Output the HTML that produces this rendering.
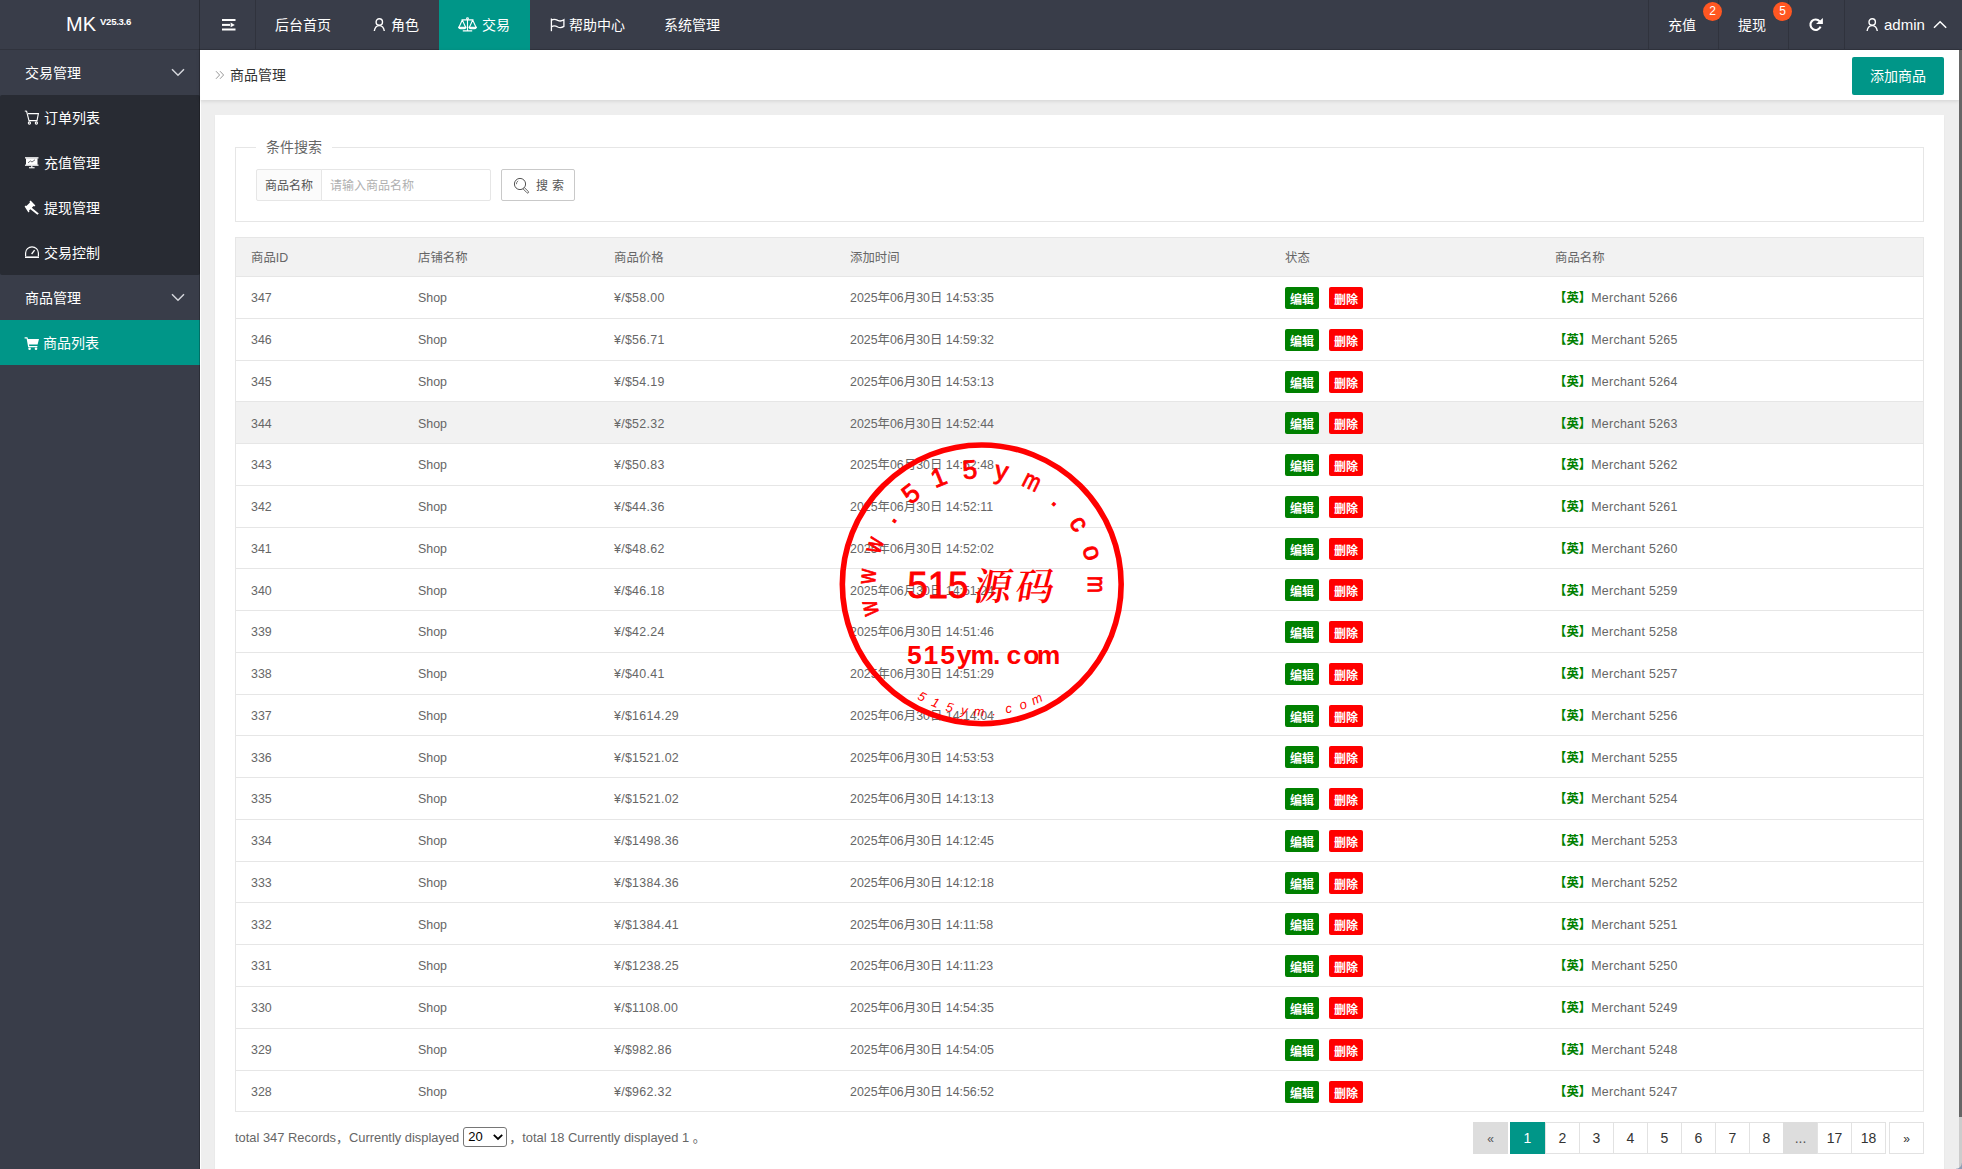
<!DOCTYPE html>
<html lang="zh-CN">
<head>
<meta charset="utf-8">
<title>商品管理</title>
<style>
*{margin:0;padding:0;box-sizing:border-box}
html,body{width:1962px;height:1169px;overflow:hidden;background:#eee;font-family:"Liberation Sans","Noto Sans CJK SC",sans-serif;font-size:14px;color:#666}
a{text-decoration:none;color:inherit}
.abs{position:absolute}
.side{position:absolute;left:0;top:0;width:200px;height:1169px;background:#393D49}
.logo{position:absolute;left:0;top:0;width:200px;height:50px;border-bottom:1px solid #30333d;color:#fff}
.logo .mk{position:absolute;left:66px;top:11px;font-size:20px;line-height:26px;letter-spacing:0px}
.logo .ver{position:absolute;left:100px;top:14.5px;font-size:9.6px;line-height:14px;font-weight:bold;letter-spacing:-0.3px}
.hdr{position:absolute;left:200px;top:0;width:1762px;height:50px;background:#393D49;border-bottom:1px solid #30333d;color:#fff}
.hdr .vl{position:absolute;top:0;width:1px;height:49px;background:#30333d}
.hdr .it{position:absolute;top:0;height:50px;line-height:51px;font-size:14px;white-space:nowrap;color:#fff}
.hdr .act{position:absolute;left:239px;top:0;width:91px;height:50px;background:#009688}
.hdr svg{position:absolute}
.badge{position:absolute;top:2px;width:19px;height:19px;border-radius:10px;background:#FF5722;color:#fff;font-size:12px;line-height:19px;text-align:center}
.menu{position:absolute;left:0;width:200px;height:45px;line-height:47px;color:#fff;font-size:14px}
.menu .t{position:absolute;left:25px;top:0;white-space:nowrap}
.menu svg{position:absolute}
.sub{position:absolute;left:0;top:95px;width:200px;height:180px;background:#282b33;border-radius:2px}
.on{background:#009688}
.crumb{position:absolute;left:200px;top:50px;width:1759px;height:50px;background:#fff;box-shadow:0 1px 4px rgba(0,0,0,.12)}
.crumb .t{position:absolute;left:30px;top:0;line-height:51px;font-size:14px;color:#333}
.crumb .add{position:absolute;left:1652px;top:7px;width:92px;height:38px;border-radius:2px;background:#009688;color:#fff;font-size:14px;line-height:38px;text-align:center}
.card{position:absolute;left:215px;top:115px;width:1729px;height:1060px;background:#fff;box-shadow:0 1px 2px rgba(0,0,0,.05)}
.fs{position:absolute;left:235px;top:147px;width:1689px;height:75px;border:1px solid #e6e6e6}
.lg{position:absolute;left:256px;top:136px;width:76px;height:22px;background:#fff;font-size:14px;line-height:22px;text-align:center;color:#666}
.lab{position:absolute;left:256px;top:169px;width:66px;height:32px;border:1px solid #e6e6e6;background:#FBFBFB;font-size:12px;line-height:33px;text-align:center;color:#555;border-radius:2px 0 0 2px}
.inp{position:absolute;left:321px;top:169px;width:170px;height:32px;border:1px solid #e6e6e6;background:#fff;font-size:12px;line-height:33px;padding-left:8px;color:#b0b0b0;border-radius:0 2px 2px 0}
.sbtn{position:absolute;left:501px;top:169px;width:74px;height:32px;border:1px solid #C9C9C9;background:#fff;border-radius:2px;font-size:12px;line-height:33px;color:#555}
.sbtn span{position:absolute;left:34px;top:0;white-space:nowrap;letter-spacing:.3px}
.tbl{position:absolute;left:235px;top:237px;width:1689px;height:875px;border:1px solid #e6e6e6;font-size:12.4px;color:#666}
.th{position:absolute;left:0;top:0;width:1687px;height:39px;background:#f2f2f2;border-bottom:1px solid #e6e6e6;line-height:41px}
.tr{position:absolute;left:0;width:1687px;border-bottom:1px solid #e6e6e6;background:#fff;line-height:20px}
.tr .c{padding-top:11px}
.hov{background:#f2f2f2}
.c{position:absolute;top:0;height:100%;white-space:nowrap}
.c1{left:15px}.c2{left:182px}.c3{left:378px}.c4{left:614px}.c5{left:1049px}.c6{left:1319px}
.b{position:absolute;top:10px;width:34px;height:22px;border-radius:2px;color:#fff;font-size:12px;line-height:26px;text-align:center;font-weight:bold;letter-spacing:0;overflow:hidden}
.g{left:0;background:#008000}
.r{left:44px;background:#f00}
.en{color:#008000;font-weight:bold}
.foot{position:absolute;left:235px;top:1121px;height:32px;line-height:33px;font-size:12.9px;color:#666;white-space:nowrap}
.sel{display:inline-block;vertical-align:middle;position:relative;width:44px;height:20px;border:1px solid #767676;border-radius:3px;background:#fff;color:#000;font-size:13px;line-height:18px;padding-left:4px;margin:0 2px 0 4px;top:-2px}
.sel svg{position:absolute;left:29px;top:6px}
.pg{position:absolute;top:1122px;height:32px;border:1px solid #e2e2e2;background:#fff;font-size:14px;line-height:30px;text-align:center;color:#333}
.pg.dis{background:#ddd;border-color:#ddd;color:#555}
.pg.cur{background:#009688;border-color:#009688;color:#fff}
.sb{position:absolute;left:1959px;top:50px;width:3px;height:1119px;background:#ccc}
.sb i{position:absolute;left:0;top:0;width:3px;height:1067px;background:#666}
.stamp{position:absolute;left:831px;top:434px;width:300px;height:300px}
.tr .c3{letter-spacing:.3px}
.tr .c6{letter-spacing:.3px;left:1318px}
.tr .c6 .en{letter-spacing:0}
.tr.d1 .c{padding-top:12px}
.tr.dm .c{padding-top:10px}
.wl{position:absolute;left:200px;top:50px;width:1px;height:1119px;background:#fff}
.sl{position:absolute;left:199px;top:0;width:1px;height:1169px;background:rgba(0,0,0,.25)}
.pg.sm{font-size:12px;line-height:32px}
.corner{position:absolute;left:1956px;top:1163px;width:6px;height:6px;background:radial-gradient(circle at 0 0,rgba(0,0,0,0) 5.2px,#8d9db6 6.2px)}

</style>
</head>
<body>
<div class="side">
  <div class="logo"><span class="mk">MK</span><span class="ver">V25.3.6</span></div>
  <div class="menu" style="top:50px"><span class="t">交易管理</span>
    <svg style="left:171px;top:18px" width="14" height="9" viewBox="0 0 14 9"><path d="M1 1.2 L7 7.2 L13 1.2" fill="none" stroke="#d5d7dc" stroke-width="1.5"/></svg></div>
  <div class="sub"></div>
  <div class="menu" style="top:95px"><span class="t" style="left:44px">订单列表</span>
    <svg style="left:24px;top:15px" width="16" height="15" viewBox="0 0 16 15" fill="none" stroke="#fff" stroke-width="1.1"><path d="M0.8 1 L2.6 1.3 L5 10.6 H13 L14.4 3.6 H4"/><circle cx="5.4" cy="13" r="1.1"/><circle cx="12.4" cy="13" r="1.1"/></svg></div>
  <div class="menu" style="top:140px"><span class="t" style="left:44px">充值管理</span>
    <svg style="left:24px;top:16px" width="16" height="13" viewBox="0 0 16 13" fill="#fff"><rect x="1" y="1.2" width="13.5" height="1.3"/><rect x="2" y="2.3" width="11.5" height="6.6"/><rect x="1" y="8.6" width="13.5" height="1.2"/><rect x="7.2" y="9.5" width="1.2" height="2"/><rect x="5" y="11.2" width="5.6" height="1.1"/><path d="M4 6.8 L6.4 5 L8 6 L11 3.8" stroke="#282b33" stroke-width="0.7" fill="none"/></svg></div>
  <div class="menu" style="top:185px"><span class="t" style="left:44px">提现管理</span>
    <svg style="left:24px;top:15px" width="16" height="16" viewBox="0 0 16 16" fill="#fff"><path d="M6.6 0.6 L11.4 5.4 L10.2 6.6 L9.6 6 L7.8 7.8 L14.8 13.4 L13.4 14.8 L6.4 9.2 L5 10.6 L5.6 11.2 L4.4 12.4 L0.6 6.6 L1.8 5.4 L2.4 6 L6 2.4 L5.4 1.8Z"/></svg></div>
  <div class="menu" style="top:230px"><span class="t" style="left:44px">交易控制</span>
    <svg style="left:24px;top:16px" width="16" height="13" viewBox="0 0 16 13" fill="none" stroke="#fff" stroke-width="1.2"><path d="M1.6 10.3 V7 A6.4 6.2 0 0 1 14.4 7 V10.3"/><path d="M1 11.2 H15" stroke-width="1.6"/><path d="M7.6 8 L10.6 4.2" stroke-width="1.3"/></svg></div>
  <div class="menu" style="top:275px"><span class="t">商品管理</span>
    <svg style="left:171px;top:18px" width="14" height="9" viewBox="0 0 14 9"><path d="M1 1.2 L7 7.2 L13 1.2" fill="none" stroke="#d5d7dc" stroke-width="1.5"/></svg></div>
  <div class="menu on" style="top:320px"><span class="t" style="left:43px">商品列表</span>
    <svg style="left:24px;top:16px" width="16" height="15" viewBox="0 0 16 15" fill="#fff"><path d="M0.6 1.2 H3.4 L4 3 H15 L13.6 8.6 H5 L5.3 10 H13.4 V11.2 H4.2 L2.6 2.4 H0.6Z"/><circle cx="5.6" cy="12.8" r="1.3"/><circle cx="12" cy="12.8" r="1.3"/></svg></div>
</div>
<div class="hdr">
  <div class="vl" style="left:55px"></div>
  <div class="act"></div>
  <div class="it" style="left:75px">后台首页</div>
  <div class="it" style="left:191px">角色</div>
  <div class="it" style="left:282px">交易</div>
  <div class="it" style="left:369px">帮助中心</div>
  <div class="it" style="left:464px">系统管理</div>
  <div class="vl" style="left:1448px"></div>
  <div class="vl" style="left:1518px"></div>
  <div class="vl" style="left:1588px"></div>
  <div class="vl" style="left:1644px"></div>
  <div class="it" style="left:1468px">充值</div>
  <div class="badge" style="left:1503px">2</div>
  <div class="it" style="left:1538px">提现</div>
  <div class="badge" style="left:1573px">5</div>
  <div class="it" style="left:1684px;font-size:15px;line-height:49px">admin</div>

  <svg style="left:21.5px;top:19px" width="14" height="12" viewBox="0 0 14 12" fill="#fff"><rect x="0" y="0" width="13.5" height="2"/><rect x="0" y="4.9" width="8" height="2"/><path d="M8.6 3.6 L12.8 5.9 L8.6 8.2Z"/><rect x="0" y="9.5" width="13.5" height="2"/></svg>
  <svg style="left:173px;top:18px" width="13" height="14" viewBox="0 0 13 14" fill="none" stroke="#fff" stroke-width="1.4"><circle cx="6.3" cy="4" r="3.2"/><path d="M1.3 13 C1.8 9.5 3.8 7.6 6.3 7.6 C8.8 7.6 10.8 9.5 11.3 13"/></svg>
  <svg style="left:258px;top:17px" width="19" height="15" viewBox="0 0 19 15" fill="none" stroke="#fff" stroke-width="1.1"><circle cx="9.5" cy="1.6" r="0.9"/><path d="M9.5 2.5 V13.8 M4.8 13.9 H14.2 M3.5 2.9 H15.5 M4.3 3 L1 10.3 M4.3 3 L7.6 10.3 M14.7 3 L11.4 10.3 M14.7 3 L18 10.3"/><path d="M0.6 10.3 H8 C7.6 12.3 1 12.3 0.6 10.3Z M11 10.3 H18.4 C18 12.3 11.4 12.3 11 10.3Z" fill="#fff"/></svg>
  <svg style="left:350px;top:18px" width="15" height="14" viewBox="0 0 15 14" fill="none" stroke="#fff" stroke-width="1.3"><path d="M1.4 0.5 V13.2"/><path d="M1.6 2.1 C4 0.4 6 1.4 7.8 2.4 C9.8 3.4 11.8 3.2 13.9 1.8 V8.4 C11.8 9.8 9.8 10 7.8 9 C6 8 4 7 1.6 8.7"/></svg>
  <svg style="left:1609px;top:18px" width="15" height="14" viewBox="0 0 15 14" fill="none" stroke="#fff" stroke-width="2.1"><path d="M10.72 3.33 A5.25 5.25 0 1 0 11.57 8.67"/><path d="M13.9 0 L13.9 6 L7 6 Z" fill="#fff" stroke="none"/></svg>
  <svg style="left:1666px;top:18px" width="13" height="14" viewBox="0 0 13 14" fill="none" stroke="#fff" stroke-width="1.4"><circle cx="6.2" cy="4" r="3.2"/><path d="M1.1 13 C1.6 9.5 3.7 7.6 6.2 7.6 C8.7 7.6 10.8 9.5 11.3 13"/></svg>
  <svg style="left:1733px;top:20px" width="14" height="9" viewBox="0 0 14 9" fill="none" stroke="#fff" stroke-width="1.5"><path d="M1 7.8 L7.1 1.7 L13.2 7.8"/></svg>
</div>
<div class="wl"></div>
<div class="sl"></div>
<div class="crumb"><svg style="position:absolute;left:15px;top:20px" width="10" height="10" viewBox="0 0 10 10" fill="none" stroke="#999" stroke-width="1"><path d="M1 1.2 L4.6 5 L1 8.8 M5 1.2 L8.6 5 L5 8.8"/></svg><span class="t">商品管理</span><a class="add">添加商品</a></div>
<div class="card"></div>
<div class="fs"></div>
<div class="lg">条件搜索</div>
<div class="lab">商品名称</div>
<div class="inp">请输入商品名称</div>
<div class="sbtn"><svg style="position:absolute;left:11px;top:7px" width="18" height="18" viewBox="0 0 18 18" fill="none" stroke="#555" stroke-width="1"><circle cx="7" cy="7" r="5.6"/><path d="M3.4 7.2 A3.6 3.6 0 0 1 5.2 3.9" stroke-width="0.8"/><path d="M11.2 10.4 L15.3 14.5 A0.9 0.9 0 0 1 14 15.8 L9.9 11.7" stroke-width="0.9"/></svg><span>搜 索</span></div>
<div class="tbl">
<div class="th"><span class="c c1">商品ID</span><span class="c c2">店铺名称</span><span class="c c3">商品价格</span><span class="c c4">添加时间</span><span class="c c5">状态</span><span class="c c6">商品名称</span></div>
<div class="tr" style="top:39px;height:42px"><span class="c c1">347</span><span class="c c2">Shop</span><span class="c c3">¥/$58.00</span><span class="c c4">2025年06月30日 14:53:35</span><span class="c c5"><a class="b g">编辑</a><a class="b r">删除</a></span><span class="c c6"><b class="en">【英】</b>Merchant 5266</span></div>
<div class="tr" style="top:81px;height:42px"><span class="c c1">346</span><span class="c c2">Shop</span><span class="c c3">¥/$56.71</span><span class="c c4">2025年06月30日 14:59:32</span><span class="c c5"><a class="b g">编辑</a><a class="b r">删除</a></span><span class="c c6"><b class="en">【英】</b>Merchant 5265</span></div>
<div class="tr" style="top:123px;height:41px"><span class="c c1">345</span><span class="c c2">Shop</span><span class="c c3">¥/$54.19</span><span class="c c4">2025年06月30日 14:53:13</span><span class="c c5"><a class="b g">编辑</a><a class="b r">删除</a></span><span class="c c6"><b class="en">【英】</b>Merchant 5264</span></div>
<div class="tr hov d1" style="top:164px;height:42px"><span class="c c1">344</span><span class="c c2">Shop</span><span class="c c3">¥/$52.32</span><span class="c c4">2025年06月30日 14:52:44</span><span class="c c5"><a class="b g">编辑</a><a class="b r">删除</a></span><span class="c c6"><b class="en">【英】</b>Merchant 5263</span></div>
<div class="tr" style="top:206px;height:42px"><span class="c c1">343</span><span class="c c2">Shop</span><span class="c c3">¥/$50.83</span><span class="c c4">2025年06月30日 14:52:48</span><span class="c c5"><a class="b g">编辑</a><a class="b r">删除</a></span><span class="c c6"><b class="en">【英】</b>Merchant 5262</span></div>
<div class="tr" style="top:248px;height:42px"><span class="c c1">342</span><span class="c c2">Shop</span><span class="c c3">¥/$44.36</span><span class="c c4">2025年06月30日 14:52:11</span><span class="c c5"><a class="b g">编辑</a><a class="b r">删除</a></span><span class="c c6"><b class="en">【英】</b>Merchant 5261</span></div>
<div class="tr" style="top:290px;height:41px"><span class="c c1">341</span><span class="c c2">Shop</span><span class="c c3">¥/$48.62</span><span class="c c4">2025年06月30日 14:52:02</span><span class="c c5"><a class="b g">编辑</a><a class="b r">删除</a></span><span class="c c6"><b class="en">【英】</b>Merchant 5260</span></div>
<div class="tr d1" style="top:331px;height:42px"><span class="c c1">340</span><span class="c c2">Shop</span><span class="c c3">¥/$46.18</span><span class="c c4">2025年06月30日 14:51:24</span><span class="c c5"><a class="b g">编辑</a><a class="b r">删除</a></span><span class="c c6"><b class="en">【英】</b>Merchant 5259</span></div>
<div class="tr" style="top:373px;height:42px"><span class="c c1">339</span><span class="c c2">Shop</span><span class="c c3">¥/$42.24</span><span class="c c4">2025年06月30日 14:51:46</span><span class="c c5"><a class="b g">编辑</a><a class="b r">删除</a></span><span class="c c6"><b class="en">【英】</b>Merchant 5258</span></div>
<div class="tr" style="top:415px;height:42px"><span class="c c1">338</span><span class="c c2">Shop</span><span class="c c3">¥/$40.41</span><span class="c c4">2025年06月30日 14:51:29</span><span class="c c5"><a class="b g">编辑</a><a class="b r">删除</a></span><span class="c c6"><b class="en">【英】</b>Merchant 5257</span></div>
<div class="tr" style="top:457px;height:41px"><span class="c c1">337</span><span class="c c2">Shop</span><span class="c c3">¥/$1614.29</span><span class="c c4">2025年06月30日 14:14:04</span><span class="c c5"><a class="b g">编辑</a><a class="b r">删除</a></span><span class="c c6"><b class="en">【英】</b>Merchant 5256</span></div>
<div class="tr d1" style="top:498px;height:42px"><span class="c c1">336</span><span class="c c2">Shop</span><span class="c c3">¥/$1521.02</span><span class="c c4">2025年06月30日 14:53:53</span><span class="c c5"><a class="b g">编辑</a><a class="b r">删除</a></span><span class="c c6"><b class="en">【英】</b>Merchant 5255</span></div>
<div class="tr" style="top:540px;height:42px"><span class="c c1">335</span><span class="c c2">Shop</span><span class="c c3">¥/$1521.02</span><span class="c c4">2025年06月30日 14:13:13</span><span class="c c5"><a class="b g">编辑</a><a class="b r">删除</a></span><span class="c c6"><b class="en">【英】</b>Merchant 5254</span></div>
<div class="tr" style="top:582px;height:42px"><span class="c c1">334</span><span class="c c2">Shop</span><span class="c c3">¥/$1498.36</span><span class="c c4">2025年06月30日 14:12:45</span><span class="c c5"><a class="b g">编辑</a><a class="b r">删除</a></span><span class="c c6"><b class="en">【英】</b>Merchant 5253</span></div>
<div class="tr" style="top:624px;height:41px"><span class="c c1">333</span><span class="c c2">Shop</span><span class="c c3">¥/$1384.36</span><span class="c c4">2025年06月30日 14:12:18</span><span class="c c5"><a class="b g">编辑</a><a class="b r">删除</a></span><span class="c c6"><b class="en">【英】</b>Merchant 5252</span></div>
<div class="tr d1" style="top:665px;height:42px"><span class="c c1">332</span><span class="c c2">Shop</span><span class="c c3">¥/$1384.41</span><span class="c c4">2025年06月30日 14:11:58</span><span class="c c5"><a class="b g">编辑</a><a class="b r">删除</a></span><span class="c c6"><b class="en">【英】</b>Merchant 5251</span></div>
<div class="tr" style="top:707px;height:42px"><span class="c c1">331</span><span class="c c2">Shop</span><span class="c c3">¥/$1238.25</span><span class="c c4">2025年06月30日 14:11:23</span><span class="c c5"><a class="b g">编辑</a><a class="b r">删除</a></span><span class="c c6"><b class="en">【英】</b>Merchant 5250</span></div>
<div class="tr" style="top:749px;height:42px"><span class="c c1">330</span><span class="c c2">Shop</span><span class="c c3">¥/$1108.00</span><span class="c c4">2025年06月30日 14:54:35</span><span class="c c5"><a class="b g">编辑</a><a class="b r">删除</a></span><span class="c c6"><b class="en">【英】</b>Merchant 5249</span></div>
<div class="tr" style="top:791px;height:42px"><span class="c c1">329</span><span class="c c2">Shop</span><span class="c c3">¥/$982.86</span><span class="c c4">2025年06月30日 14:54:05</span><span class="c c5"><a class="b g">编辑</a><a class="b r">删除</a></span><span class="c c6"><b class="en">【英】</b>Merchant 5248</span></div>
<div class="tr" style="top:833px;height:41px"><span class="c c1">328</span><span class="c c2">Shop</span><span class="c c3">¥/$962.32</span><span class="c c4">2025年06月30日 14:56:52</span><span class="c c5"><a class="b g">编辑</a><a class="b r">删除</a></span><span class="c c6"><b class="en">【英】</b>Merchant 5247</span></div>
</div>
<div class="foot">total 347 Records，Currently displayed<span class="sel">20<svg width="10" height="7" viewBox="0 0 10 7" fill="none" stroke="#000" stroke-width="1.8"><path d="M0.8 0.8 L5 5 L9.2 0.8"/></svg></span>，total 18 Currently displayed 1 。</div>
<div class="pg dis sm" style="left:1473px;width:35px">«</div>
<div class="pg cur" style="left:1510px;width:35px">1</div>
<div class="pg" style="left:1545px;width:35px">2</div>
<div class="pg" style="left:1579px;width:35px">3</div>
<div class="pg" style="left:1613px;width:35px">4</div>
<div class="pg" style="left:1647px;width:35px">5</div>
<div class="pg" style="left:1681px;width:35px">6</div>
<div class="pg" style="left:1715px;width:35px">7</div>
<div class="pg" style="left:1749px;width:35px">8</div>
<div class="pg dis" style="left:1783px;width:35px">...</div>
<div class="pg" style="left:1817px;width:35px">17</div>
<div class="pg" style="left:1851px;width:35px">18</div>
<div class="pg sm" style="left:1889px;width:35px">»</div>
<svg class="stamp" width="300" height="300" viewBox="0 0 300 300" fill="#f00">
<circle cx="150.75" cy="150.35" r="139.4" fill="none" stroke="#f00" stroke-width="5.6"/>
<text transform="translate(150.75 150.35) rotate(-102) translate(0 -106.5) scale(0.78 1)" text-anchor="middle" font-size="26" font-family="'Liberation Sans',sans-serif" stroke="#f00" stroke-width="0.9">w</text>
<text transform="translate(150.75 150.35) rotate(-86) translate(0 -106.5) scale(0.78 1)" text-anchor="middle" font-size="26" font-family="'Liberation Sans',sans-serif" stroke="#f00" stroke-width="0.9">w</text>
<text transform="translate(150.75 150.35) rotate(-70) translate(0 -106.5) scale(0.78 1)" text-anchor="middle" font-size="26" font-family="'Liberation Sans',sans-serif" stroke="#f00" stroke-width="0.9">w</text>
<text transform="translate(150.75 150.35) rotate(-54) translate(0 -106.5) scale(1 1)" text-anchor="middle" font-size="26" font-family="'Liberation Sans',sans-serif" stroke="#f00" stroke-width="0.9">.</text>
<text transform="translate(150.75 150.35) rotate(-38) translate(0 -106.5) scale(1 1)" text-anchor="middle" font-size="26" font-family="'Liberation Sans',sans-serif" stroke="#f00" stroke-width="0.9">5</text>
<text transform="translate(150.75 150.35) rotate(-22) translate(0 -106.5) scale(1 1)" text-anchor="middle" font-size="26" font-family="'Liberation Sans',sans-serif" stroke="#f00" stroke-width="0.9">1</text>
<text transform="translate(150.75 150.35) rotate(-6) translate(0 -106.5) scale(1 1)" text-anchor="middle" font-size="26" font-family="'Liberation Sans',sans-serif" stroke="#f00" stroke-width="0.9">5</text>
<text transform="translate(150.75 150.35) rotate(10) translate(0 -106.5) scale(1 1)" text-anchor="middle" font-size="26" font-family="'Liberation Sans',sans-serif" stroke="#f00" stroke-width="0.9">y</text>
<text transform="translate(150.75 150.35) rotate(26) translate(0 -106.5) scale(0.78 1)" text-anchor="middle" font-size="26" font-family="'Liberation Sans',sans-serif" stroke="#f00" stroke-width="0.9">m</text>
<text transform="translate(150.75 150.35) rotate(42) translate(0 -106.5) scale(1 1)" text-anchor="middle" font-size="26" font-family="'Liberation Sans',sans-serif" stroke="#f00" stroke-width="0.9">.</text>
<text transform="translate(150.75 150.35) rotate(58) translate(0 -106.5) scale(1 1)" text-anchor="middle" font-size="26" font-family="'Liberation Sans',sans-serif" stroke="#f00" stroke-width="0.9">c</text>
<text transform="translate(150.75 150.35) rotate(74) translate(0 -106.5) scale(1 1)" text-anchor="middle" font-size="26" font-family="'Liberation Sans',sans-serif" stroke="#f00" stroke-width="0.9">o</text>
<text transform="translate(150.75 150.35) rotate(90) translate(0 -106.5) scale(0.78 1)" text-anchor="middle" font-size="26" font-family="'Liberation Sans',sans-serif" stroke="#f00" stroke-width="0.9">m</text>
<text transform="translate(150.75 150.35) rotate(28.0) translate(0 131.5)" text-anchor="middle" font-size="13" font-style="italic" font-family="'Liberation Sans',sans-serif">5</text>
<text transform="translate(150.75 150.35) rotate(21.3) translate(0 131.5)" text-anchor="middle" font-size="13" font-style="italic" font-family="'Liberation Sans',sans-serif">1</text>
<text transform="translate(150.75 150.35) rotate(14.6) translate(0 131.5)" text-anchor="middle" font-size="13" font-style="italic" font-family="'Liberation Sans',sans-serif">5</text>
<text transform="translate(150.75 150.35) rotate(7.899999999999999) translate(0 131.5)" text-anchor="middle" font-size="13" font-style="italic" font-family="'Liberation Sans',sans-serif">y</text>
<text transform="translate(150.75 150.35) rotate(1.1999999999999993) translate(0 131.5)" text-anchor="middle" font-size="13" font-style="italic" font-family="'Liberation Sans',sans-serif">m</text>
<text transform="translate(150.75 150.35) rotate(-5.5) translate(0 131.5)" text-anchor="middle" font-size="13" font-style="italic" font-family="'Liberation Sans',sans-serif">.</text>
<text transform="translate(150.75 150.35) rotate(-12.200000000000003) translate(0 131.5)" text-anchor="middle" font-size="13" font-style="italic" font-family="'Liberation Sans',sans-serif">c</text>
<text transform="translate(150.75 150.35) rotate(-18.9) translate(0 131.5)" text-anchor="middle" font-size="13" font-style="italic" font-family="'Liberation Sans',sans-serif">o</text>
<text transform="translate(150.75 150.35) rotate(-25.6) translate(0 131.5)" text-anchor="middle" font-size="13" font-style="italic" font-family="'Liberation Sans',sans-serif">m</text>
<text x="76.5" y="164" font-size="36.5" font-family="'Liberation Sans',sans-serif" stroke="#f00" stroke-width="0.9">515</text>
<text transform="translate(141 165.5) skewX(-10)" font-size="38" font-weight="600" letter-spacing="4" font-family="'Noto Serif CJK SC','Noto Sans CJK SC',serif">源码</text>
<text y="229.6" font-size="26.5" font-weight="bold" font-family="'Liberation Sans',sans-serif" x="76.0 92.6 109.2 125.8 139.4 162.0 175.6 192.2 205.8">515ym.com</text>
</svg>
<div class="sb"><i></i></div>
<div class="corner"></div>
</body>
</html>
